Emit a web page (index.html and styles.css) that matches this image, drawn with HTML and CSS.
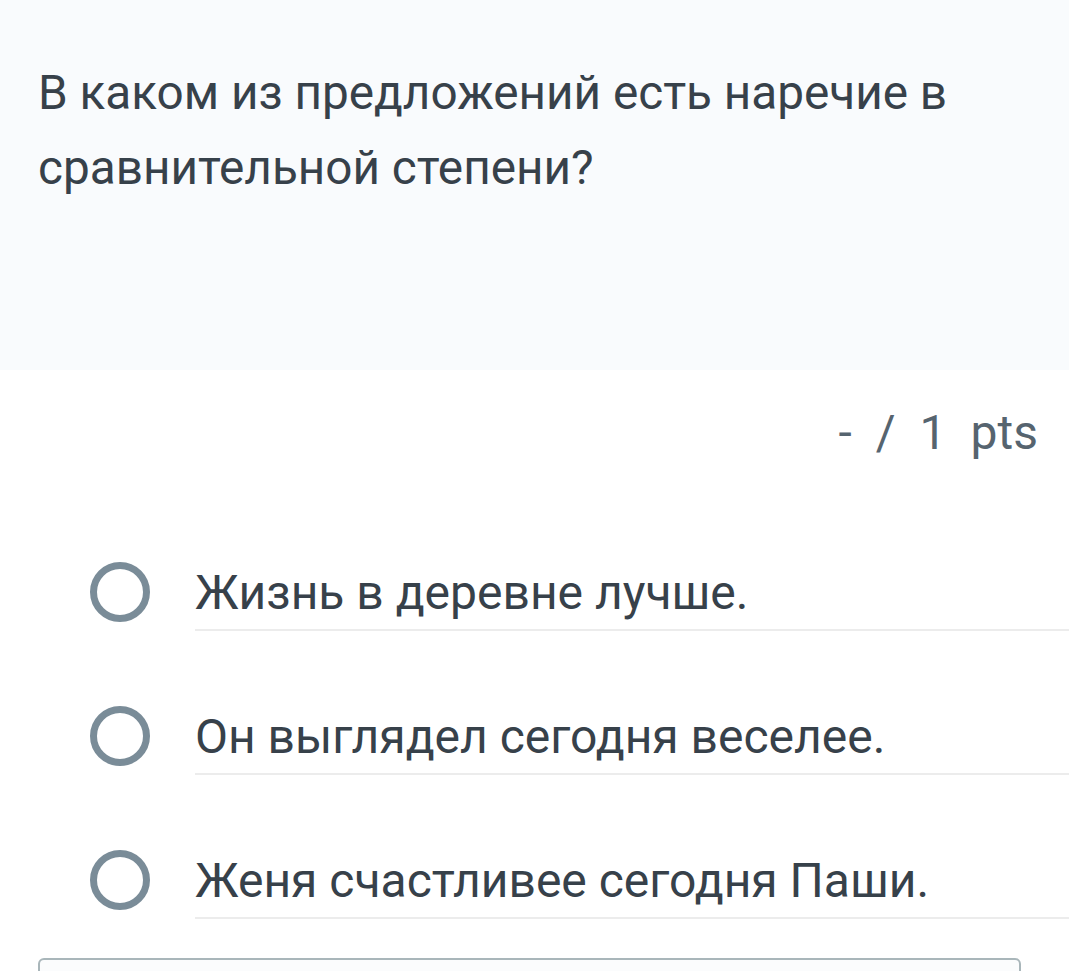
FILE: index.html
```html
<!DOCTYPE html>
<html lang="ru">
<head>
<meta charset="utf-8">
<link rel="stylesheet" href="styles.css">
</head>
<body>
<div class="question">
  <p class="question-text">В каком из предложений есть наречие в сравнительной степени?</p>
</div>
<div class="points"><span>-</span><span>/</span><span>1</span><span>pts</span></div>
<ul class="options">
  <li class="option"><span class="radio"></span><span class="label">Жизнь в деревне лучше.</span></li>
  <li class="option"><span class="radio"></span><span class="label">Он выглядел сегодня веселее.</span></li>
  <li class="option"><span class="radio"></span><span class="label">Женя счастливее сегодня Паши.</span></li>
</ul>
<div class="answer-box"></div>
</body>
</html>
```
FILE: styles.css
```css
html, body {
  margin: 0;
  padding: 0;
  background: #ffffff;
  font-family: Roboto, "Noto Sans", sans-serif;
  overflow: hidden;
}
.question {
  background: #f9fbfd;
  height: 370px;
  padding: 0 38px;
  box-sizing: border-box;
}
.question-text {
  margin: 0;
  padding-top: 56px;
  font-size: 47.7px;
  line-height: 75px;
  color: #37414a;
}
.points {
  display: flex;
  justify-content: flex-end;
  gap: 24px;
  padding: 37px 31px 0 0;
  height: 76px;
  font-size: 48px;
  line-height: 52px;
  color: #56646f;
}
.options {
  list-style: none;
  margin: 0;
  padding: 73px 0 0 0;
  display: flex;
  flex-direction: column;
  gap: 69px;
}
.option {
  display: flex;
  align-items: flex-start;
}
.radio {
  width: 46px;
  height: 46px;
  border: 7px solid #7a8c98;
  border-radius: 50%;
  margin: 6px 45px 0 90px;
  flex: none;
}
.label {
  flex: 1;
  font-size: 48px;
  line-height: 52px;
  color: #37414a;
  padding-bottom: 10px;
  border-bottom: 2px solid #ececec;
  margin-top: 11px;
}
.answer-box {
  margin: 39px 48px 0 38px;
  height: 40px;
  border: 2px solid #a9b6ba;
  border-radius: 6px;
  background: #fbfcfd;
}
```
